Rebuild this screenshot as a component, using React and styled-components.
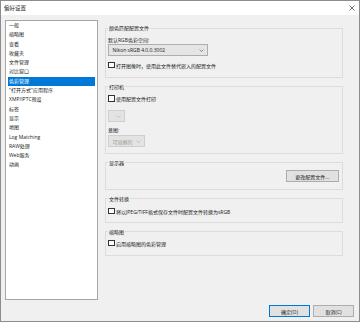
import React from 'react';
import styled, { createGlobalStyle } from 'styled-components';

const GlobalStyle = createGlobalStyle`
  html, body {
    margin: 0;
    padding: 0;
    background: #f0f0f0;
  }
  body {
    font-family: "Open Sans", "Noto Sans CJK SC", sans-serif;
    font-size: 5px;
    color: #1a1a1a;
  }
`;

const Window = styled.div`
  width: 360px;
  height: 322px;
  box-sizing: border-box;
  border: 1px solid #8c8c8c;
  display: flex;
  flex-direction: column;
  background: #f0f0f0;
`;

const TitleBar = styled.div`
  height: 13px;
  flex: none;
  background: #fff;
  display: flex;
  align-items: center;
  justify-content: space-between;
  padding: 0 4px 1px 3px;
  font-size: 5.5px;
  color: #222;
`;

const Body = styled.div`
  flex: 1;
  display: flex;
  flex-direction: column;
  padding: 5px 5px 0 4px;
`;

const Main = styled.div`
  display: flex;
  align-items: flex-start;
`;

const List = styled.ul`
  list-style: none;
  margin: 0;
  padding: 0 2px;
  width: 93px;
  height: 280px;
  box-sizing: border-box;
  border: 1px solid #a6a6a6;
  background: #fff;
`;

const Item = styled.li`
  height: 9.3px;
  line-height: 9.3px;
  padding-left: 1px;
  white-space: nowrap;
  background: ${p => (p.$selected ? '#0078d7' : 'transparent')};
  color: ${p => (p.$selected ? '#fff' : '#1a1a1a')};
`;

const Right = styled.div`
  width: 238px;
  margin-left: 7px;
  margin-top: 4px;
  display: flex;
  flex-direction: column;
  gap: 4.5px;
`;

const Group = styled.fieldset`
  margin: 0;
  min-width: 0;
  border: 1px solid #dcdcdc;
  padding: ${p => p.$pad || '4px 2px 7px 2px'};
  display: flex;
  flex-direction: column;
  align-items: ${p => (p.$end ? 'flex-end' : 'flex-start')};
`;

const Legend = styled.legend`
  padding: 0 1px;
  margin: 0;
  line-height: 8px;
  font-size: 5px;
  color: #1a1a1a;
`;

const Label = styled.div`
  line-height: 8px;
  margin-top: ${p => p.$mt || 0}px;
`;

const Select = styled.div`
  box-sizing: border-box;
  width: ${p => p.$w}px;
  height: 12px;
  margin-top: ${p => p.$mt || 0}px;
  margin-left: -0.5px;
  border: 1px solid ${p => (p.$disabled ? '#cfcfcf' : '#adadad')};
  background: ${p => (p.$disabled ? '#e3e3e3' : '#e5e5e5')};
  color: ${p => (p.$disabled ? '#9a9a9a' : '#1a1a1a')};
  display: flex;
  align-items: center;
  justify-content: space-between;
  padding: 0 3px 0 4px;
`;

const CheckRow = styled.label`
  display: flex;
  align-items: center;
  gap: 1.5px;
  height: 8px;
  margin-top: ${p => p.$mt || 0}px;
  white-space: nowrap;
`;

const Box = styled.span`
  width: 6.5px;
  height: 6.5px;
  box-sizing: border-box;
  border: 1px solid #333;
  background: #fff;
  flex: none;
`;

const Button = styled.button`
  box-sizing: border-box;
  width: ${p => p.$w || 41}px;
  height: 12px;
  margin-top: ${p => p.$mt || 0}px;
  padding: 0;
  font-family: inherit;
  font-size: 5px;
  color: #1a1a1a;
  background: #e1e1e1;
  border: 1px solid ${p => (p.$primary ? '#0078d7' : '#adadad')};
`;

const Footer = styled.div`
  display: flex;
  justify-content: flex-end;
  gap: 3px;
  margin-top: 5px;
`;

const Chevron = ({ color = '#555' }) => (
  <svg width="5" height="3" viewBox="0 0 5 3">
    <path d="M0.5 0.5 L2.5 2.5 L4.5 0.5" fill="none" stroke={color} strokeWidth="0.6" />
  </svg>
);

const CloseIcon = () => (
  <svg width="6" height="6" viewBox="0 0 6 6">
    <path d="M0.5 0.5 L5.5 5.5 M5.5 0.5 L0.5 5.5" stroke="#333" strokeWidth="0.7" />
  </svg>
);

const items = [
  '一般', '缩略图', '查看', '收藏夹', '文件管理', '对比窗口', '色彩管理',
  '"打开方式"应用程序', 'XMP/IPTC预设', '标签', '显示', '地图',
  'Log Matching', 'RAW处理', 'Web服务', '动画',
];

const App = () => (
  <>
    <GlobalStyle />
    <Window>
      <TitleBar>
        <span>偏好设置</span>
        <CloseIcon />
      </TitleBar>
      <Body>
        <Main>
          <List>
            {items.map(t => (
              <Item key={t} $selected={t === '色彩管理'}>{t}</Item>
            ))}
          </List>
          <Right>
            <Group $pad="4px 2px 8px 2px">
              <Legend>颜色匹配配置文件</Legend>
              <Label>默认RGB色彩空间:</Label>
              <Select $w={100}>
                <span>Nikon sRGB 4.0.0.3002</span>
                <Chevron />
              </Select>
              <CheckRow $mt={5}>
                <Box />
                <span>打开图像时，使用此文件替代嵌入的配置文件</span>
              </CheckRow>
            </Group>
            <Group $pad="4px 2px 6px 2px">
              <Legend>打印机</Legend>
              <CheckRow>
                <Box />
                <span>使用配置文件打印</span>
              </CheckRow>
              <Select $w={17} $mt={7.5} $disabled>
                <span />
                <Chevron color="#aaa" />
              </Select>
              <Label $mt={3.5}>意图:</Label>
              <Select $w={37} $mt={1.7} $disabled>
                <span>可觉察的</span>
                <Chevron color="#aaa" />
              </Select>
            </Group>
            <Group $pad="3.5px 3px 7px 2px" $end>
              <Legend>显示器</Legend>
              <Button $w={53.5}>更改配置文件...</Button>
            </Group>
            <Group $pad="4.5px 2px 7px 2px">
              <Legend>文件转换</Legend>
              <CheckRow>
                <Box />
                <span>将以JPEG/TIFF格式保存文件时配置文件转换为sRGB</span>
              </CheckRow>
            </Group>
            <Group $pad="3.5px 2px 8px 2px">
              <Legend>缩略图</Legend>
              <CheckRow>
                <Box />
                <span>启用缩略图的色彩管理</span>
              </CheckRow>
            </Group>
          </Right>
        </Main>
        <Footer>
          <Button $primary>确定(O)</Button>
          <Button>取消(C)</Button>
        </Footer>
      </Body>
    </Window>
  </>
);

export default App;
